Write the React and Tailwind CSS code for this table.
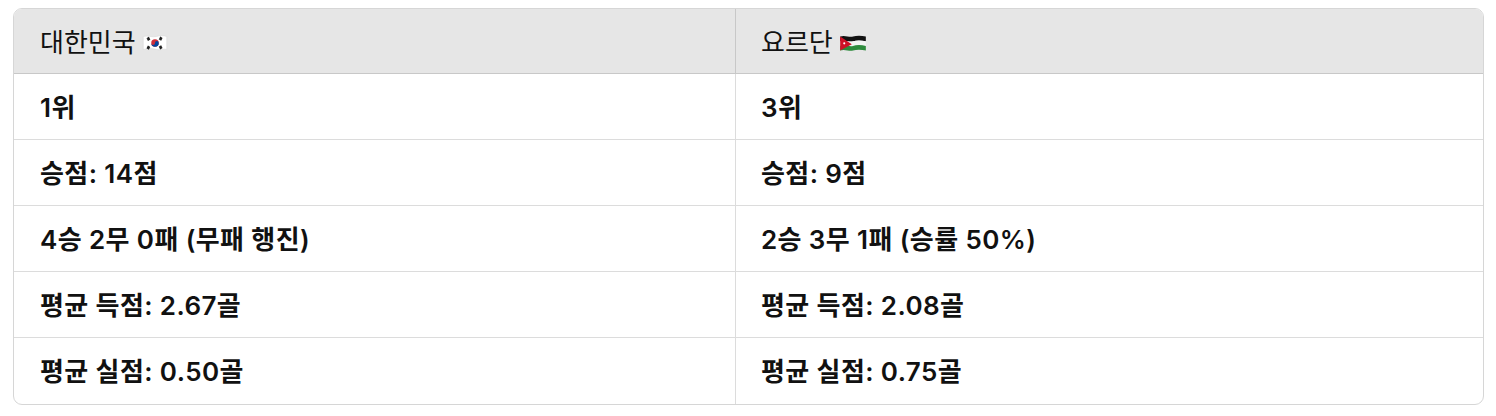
import React from "react";

const rows = [
  ["1위", "3위"],
  ["승점: 14점", "승점: 9점"],
  ["4승 2무 0패 (무패 행진)", "2승 3무 1패 (승률 50%)"],
  ["평균 득점: 2.67골", "평균 득점: 2.08골"],
  ["평균 실점: 0.50골", "평균 실점: 0.75골"],
];

function KoreaFlag() {
  return (
    <svg width="26" height="20" viewBox="0 0 22 17" className="inline-block">
      <path d="M1 3c4 -1.2 8 1 11 0s7 -1 9 0v11c-3 -1 -6 1 -9 0s-7 -1 -11 0z" fill="#fff" stroke="#d8d8d8" strokeWidth="0.5" />
      <circle cx="11" cy="8.5" r="3.2" fill="#cd2e3a" />
      <path d="M7.8 8.5a1.6 1.6 0 0 0 3.2 0a1.6 1.6 0 0 1 3.2 0a3.2 3.2 0 0 1-6.4 0z" fill="#0047a0" />
      <g stroke="#222" strokeWidth="0.9">
        <path d="M4 4.8l2 -1.3M4.4 5.6l2 -1.3M4.8 6.4l2 -1.3" />
        <path d="M15.2 3.4l2 1.3M14.8 4.2l2 1.3M14.4 5l2 1.3" />
        <path d="M4 12.5l2 1.3M4.4 11.7l2 1.3M4.8 10.9l2 1.3" />
        <path d="M15.2 13.6l2 -1.3M14.8 12.8l2 -1.3M14.4 12l2 -1.3" />
      </g>
    </svg>
  );
}

function JordanFlag() {
  return (
    <svg width="28" height="20" viewBox="0 0 24 17" className="inline-block">
      <path d="M1 3c4 -1.5 8 1 11 0s7 -1 11 0v4c-4 -1 -8 -1 -11 0s-7 -1.5 -11 0z" fill="#111" />
      <path d="M1 7c4 -1.5 8 1 11 0s7 -1 11 0v4c-4 -1 -8 -1 -11 0s-7 -1.5 -11 0z" fill="#f4f4f4" />
      <path d="M1 11c4 -1.5 8 1 11 0s7 -1 11 0v4c-4 -1 -8 -1 -11 0s-7 -1.5 -11 0z" fill="#2e8b3d" />
      <path d="M1 3l10 6.5l-10 5.5z" fill="#ce1126" />
      <circle cx="4.5" cy="8.8" r="0.9" fill="#fff" />
    </svg>
  );
}

export default function App() {
  return (
    <div className="w-[1496px] h-[416px] bg-white pt-2 pl-[13px] pr-[12px]" style={{ fontFamily: '"Inter", "Noto Sans CJK KR", sans-serif' }}>
      <div className="rounded-[9px] border border-[#d6d6d6] overflow-hidden text-[#111111]">
        <div className="grid grid-cols-[722px_1fr] bg-[#e6e6e6] border-b border-[#c8c8c8] h-[65px]">
          <div className="flex items-center gap-1.5 pl-[26px] pt-[3px] border-r border-[#c8c8c8] text-[26px] leading-none font-normal">
            <span>대한민국</span>
            <KoreaFlag />
          </div>
          <div className="flex items-center gap-1.5 pl-[25px] pt-[3px] text-[26px] leading-none font-normal">
            <span>요르단</span>
            <JordanFlag />
          </div>
        </div>
        {rows.map((r, i) => (
          <div
            key={i}
            className={`grid grid-cols-[722px_1fr] h-[66px] ${i < rows.length - 1 ? "border-b border-[#dcdcdc]" : ""}`}
          >
            <div className="flex items-center pl-[26px] pt-[2px] border-r border-[#dcdcdc] text-[26px] tracking-[0.4px] leading-none font-semibold">
              {r[0]}
            </div>
            <div className="flex items-center pl-[25px] pt-[2px] text-[26px] tracking-[0.4px] leading-none font-semibold">{r[1]}</div>
          </div>
        ))}
      </div>
    </div>
  );
}
